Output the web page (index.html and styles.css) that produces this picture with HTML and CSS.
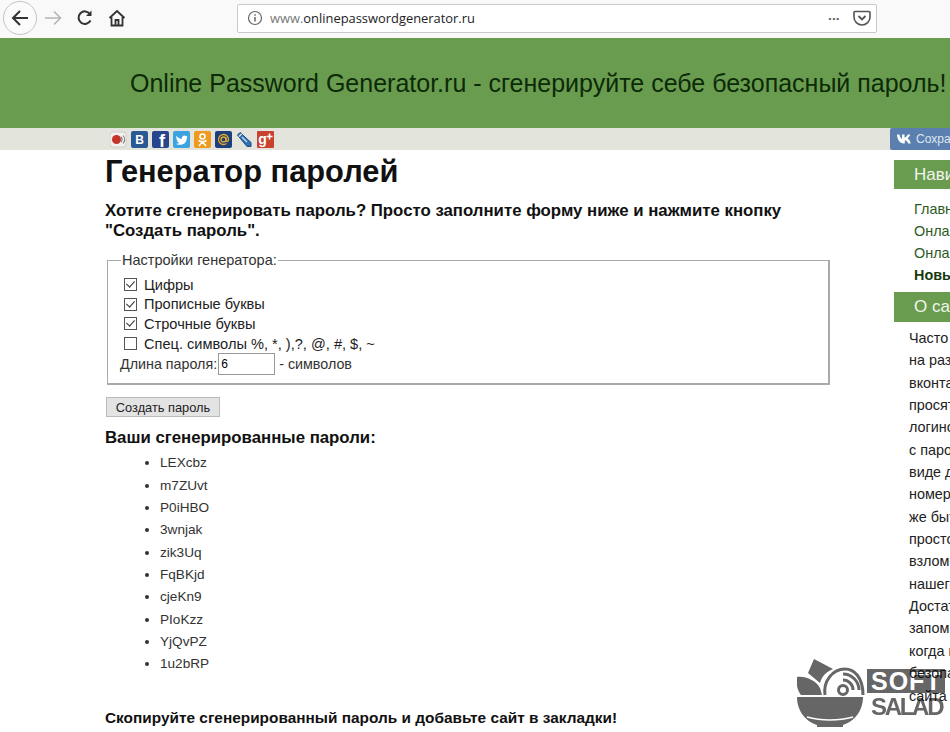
FILE: index.html
```html
<!DOCTYPE html>
<html lang="ru">
<head>
  <meta charset="UTF-8">
  <meta name="viewport" content="width=device-width, initial-scale=1.0">
  <title>Генератор паролей</title>
  <link rel="stylesheet" href="styles.css">
</head>
<body>
  <div class="toolbar">
    <div class="back-btn">
      <svg width="20" height="20" viewBox="0 0 20 20"><path d="M18 10H3M10 3l-7 7 7 7" fill="none" stroke="#333" stroke-width="2"/></svg>
    </div>
    <svg class="tool-icon forward" width="18" height="18" viewBox="0 0 18 18"><path d="M1 9h15M10 2.500l6.500 6.500-6.500 6.500" fill="none" stroke="#b5b5b5" stroke-width="1.600"/></svg>
    <svg class="tool-icon reload" width="18" height="18" viewBox="0 0 18 18"><path d="M14.500 11.500A6.300 6.300 0 1 1 14 5" fill="none" stroke="#333" stroke-width="2"/><path d="M15.500 1.500v5.500h-5.500z" fill="#333"/></svg>
    <svg class="tool-icon home" width="18" height="18" viewBox="0 0 18 18"><path d="M1.500 9 9 2l7.500 7M3.500 8v8.500h11V8M7.500 16.500V11h3v5.500" fill="none" stroke="#333" stroke-width="1.800"/></svg>
    <div class="urlbar">
      <svg class="info" width="16" height="16" viewBox="0 0 16 16"><circle cx="8" cy="8" r="6.500" fill="none" stroke="#666" stroke-width="1.200"/><path d="M8 7v4.500M8 4.300v1.500" stroke="#666" stroke-width="1.500"/></svg>
      <span class="url"><span class="url-dim">www.</span>onlinepasswordgenerator.ru</span>
      <span class="dots">•••</span>
      <svg class="pocket" width="18" height="18" viewBox="0 0 18 18"><path d="M2 2.500h14a1 1 0 0 1 1 1V8a8 8 0 0 1-16 0V3.500a1 1 0 0 1 1-1z" fill="none" stroke="#555" stroke-width="1.600"/><path d="M5.500 7 9 10.500 12.500 7" fill="none" stroke="#555" stroke-width="1.800"/></svg>
    </div>
  </div>

  <header class="site-header">
    <div class="site-title">Online Password Generator.ru - сгенерируйте себе безопасный пароль!</div>
  </header>

  <div class="share-strip">
    <div class="share-icons">
      <svg width="17" height="17" viewBox="0 0 17 17"><rect x="0" y="1" width="16" height="15" rx="3" fill="#f3f1ee" stroke="#cfcdc8"/><circle cx="6.500" cy="8.500" r="4.500" fill="#c8322c"/><path d="M11 6a3.500 3.500 0 0 1 0 5M13 4.500a6 6 0 0 1 0 8" fill="none" stroke="#777" stroke-width="1.100"/></svg>
      <svg width="17" height="17" viewBox="0 0 17 17"><rect width="17" height="17" rx="2" fill="#2a5a94"/><text x="8.500" y="13" class="icon-letter">B</text></svg>
      <svg width="17" height="17" viewBox="0 0 17 17"><rect width="17" height="17" rx="2" fill="#27458c"/><text x="10" y="15.500" class="icon-letter icon-f">f</text></svg>
      <svg width="17" height="17" viewBox="0 0 17 17"><rect width="17" height="17" rx="2" fill="#3ba3e0"/><path d="M3 5c2.500 2 4.500 2.800 5.800 2.800C8.600 5 11.500 3.600 13 5.300l1.500-.6-.8 1.500 1-.2-1 1.200c0 4-3 7-8 6.500-1-.1-2-.5-2.700-1 1.500 0 2.600-.4 3.400-1-1.400-.2-2.200-1-2.500-2h1.200C3.900 9.200 3.200 8.200 3.200 7l1.100.3C3.200 6.500 2.800 6 3 5z" fill="#fff"/></svg>
      <svg width="17" height="17" viewBox="0 0 17 17"><rect width="17" height="17" rx="2" fill="#ef9a1e"/><circle cx="8.500" cy="5.500" r="2.500" fill="none" stroke="#fff" stroke-width="1.600"/><path d="M4.500 9.500c2.500 1.600 5.500 1.600 8 0M8.500 11l-3.500 4M8.500 11l3.500 4" fill="none" stroke="#fff" stroke-width="1.600"/></svg>
      <svg width="17" height="17" viewBox="0 0 17 17"><rect width="17" height="17" rx="2" fill="#1f3f7c"/><circle cx="8.500" cy="8.500" r="2.500" fill="none" stroke="#e0a92a" stroke-width="1.300"/><path d="M11 6v3.500c0 1.500 2.500 1.500 2.500-1A5 5 0 1 0 11.500 12.500" fill="none" stroke="#e0a92a" stroke-width="1.300"/></svg>
      <svg width="17" height="17" viewBox="0 0 17 17"><path d="M1.500 4 4 1.500 15 11.500v4h-4z" fill="#2f6fb4" stroke="#1d4a80"/><path d="M3 5.500 5.500 3" stroke="#dbe8f5" stroke-width="1.500"/><path d="M6 6l5 5" stroke="#bcd6ee" stroke-width="1.500"/></svg>
      <svg width="17" height="17" viewBox="0 0 17 17"><rect width="17" height="17" rx="1" fill="#c8432f"/><text x="5.500" y="13" class="icon-letter icon-g">g</text><path d="M12.500 2.500v6M9.500 5.500h6" stroke="#fff" stroke-width="1.600"/></svg>
    </div>
    <div class="vk-save">
      <svg width="17" height="10" viewBox="0 0 17 10"><path d="M1 .5h2.500c.3 2.500 1.500 4 2.500 4.500V.5h2.500V3.500C9.800 3.300 11 2 11.800.5h2.400c-.4 1.800-1.700 3-2.700 3.800 1.200.7 2.600 2 3.300 5.200h-2.600c-.6-1.800-1.800-3-3.400-3.200v3.200H7.500C4 9.500 1.300 6 1 .5z" fill="#fff"/></svg>
      <span>Сохранить</span>
    </div>
  </div>

  <div class="page">
    <main class="content">
      <h1>Генератор паролей</h1>
      <p class="lead">Хотите сгенерировать пароль? Просто заполните форму ниже и нажмите кнопку "Создать пароль".</p>
      <form>
        <fieldset class="settings">
          <legend>Настройки генератора:</legend>
          <label class="check-row"><input type="checkbox" checked> Цифры</label>
          <label class="check-row"><input type="checkbox" checked> Прописные буквы</label>
          <label class="check-row"><input type="checkbox" checked> Строчные буквы</label>
          <label class="check-row"><input type="checkbox"> Спец. символы %, *, ),?, @, #, $, ~</label>
          <div class="length-row">Длина пароля:<input type="text" class="length-input" value="6"> - символов</div>
        </fieldset>
        <button type="button" class="create-btn">Создать пароль</button>
      </form>
      <h3>Ваши сгенерированные пароли:</h3>
      <ul class="passwords">
        <li>LEXcbz</li>
        <li>m7ZUvt</li>
        <li>P0iHBO</li>
        <li>3wnjak</li>
        <li>zik3Uq</li>
        <li>FqBKjd</li>
        <li>cjeKn9</li>
        <li>PIoKzz</li>
        <li>YjQvPZ</li>
        <li>1u2bRP</li>
      </ul>
      <p class="copy-note">Скопируйте сгенерированный пароль и добавьте сайт в закладки!</p>
    </main>

    <aside class="sidebar">
      <div class="side-title">Навигация</div>
      <ul class="side-nav">
        <li>Главная</li>
        <li>Онлайн</li>
        <li>Онлайн</li>
        <li class="current">Новый</li>
      </ul>
      <div class="side-title side-title-about">О сайте</div>
      <div class="side-text">
        <div>Часто</div>
        <div>на разных</div>
        <div>вконтакте</div>
        <div>просят</div>
        <div>логинов</div>
        <div>с паролем</div>
        <div>виде даты</div>
        <div>номера</div>
        <div>же быть</div>
        <div>просто</div>
        <div>взломе</div>
        <div>нашего</div>
        <div>Достаточно</div>
        <div>запомнить</div>
        <div>когда нужно</div>
        <div>безопасный</div>
        <div>сайта</div>
      </div>
    </aside>
  </div>

  <div class="watermark">
    <svg class="wm-bowl" width="70" height="72" viewBox="0 0 70 72">
      <path d="M0 39h66c0 15-10 25-20 28v2H20v-2C10 64 0 54 0 39z" fill="#666"/>
      <path d="M10 59c14 4 32 4 46 0" fill="none" stroke="#fff" stroke-width="1.500"/>
      <path d="M17 1 36 11C29 14 25 18 23 25L11 15z" fill="#666"/>
      <path d="M0 19c9-1 18 3 23 11l2 7H4C0 32-1 25 0 19z" fill="#666"/>
      <path d="M28 37c-2-13 7-26 20-26 9 0 18 8 18 26" fill="none" stroke="#666" stroke-width="3"/>
      <circle cx="46" cy="32" r="4.500" fill="none" stroke="#666" stroke-width="3"/>
      <path d="M46 22a10 10 0 0 1 10 10M46 16a16 16 0 0 1 16 16" fill="none" stroke="#666" stroke-width="3"/>
    </svg>
    <div class="wm-text">
      <div class="wm-soft">SOFT</div>
      <div class="wm-salad">SALAD</div>
    </div>
  </div>
</body>
</html>
```

FILE: styles.css
```css
html, body {
  margin: 0;
  width: 950px;
  height: 732px;
  overflow: hidden;
}
body {
  font-family: "Liberation Sans", Arial, sans-serif;
  font-size: 14px;
  color: #111;
  background: #fff;
  position: relative;
}

/* browser bar */
.toolbar {
  height: 38px;
  box-sizing: border-box;
  background: #f9f9fa;
  display: flex;
  align-items: center;
  padding: 0 0 2px 3px;
}
.back-btn {
  width: 32px;
  height: 32px;
  border: 1px solid #c4c4c6;
  border-radius: 50%;
  background: #fbfbfb;
  display: flex;
  align-items: center;
  justify-content: center;
}
.tool-icon {
  flex: none;
}
.forward {
  margin-left: 7px;
}
.reload {
  margin-left: 14px;
}
.home {
  margin-left: 14px;
}
.urlbar {
  margin-left: 111px;
  width: 640px;
  height: 29px;
  box-sizing: border-box;
  background: #fff;
  border: 1px solid #c9c9cb;
  border-radius: 2px;
  display: flex;
  align-items: center;
  padding: 0 5px 0 9px;
}
.url {
  margin-left: 7px;
  font-family: "Open Sans", sans-serif;
  font-size: 12.900px;
  color: #222;
  flex: 1;
}
.url-dim {
  color: #777;
}
.dots {
  font-size: 8px;
  color: #555;
  letter-spacing: 1px;
  margin-right: 13px;
}

/* header */
.site-header {
  height: 90px;
  background: #699c4f;
  display: flex;
  align-items: center;
  padding-left: 130px;
  box-sizing: border-box;
}
.site-title {
  font-size: 25px;
  color: #0d2a08;
  white-space: nowrap;
}
.share-strip {
  height: 22px;
  background: #e3e4dc;
  display: flex;
  align-items: center;
  justify-content: space-between;
  padding-left: 110px;
}
.share-icons {
  display: flex;
  gap: 4px;
}
.icon-letter {
  font-family: "Liberation Sans", sans-serif;
  font-size: 12px;
  font-weight: bold;
  fill: #fff;
  text-anchor: middle;
}
.icon-f {
  font-size: 18px;
}
.icon-g {
  font-size: 14px;
}
.vk-save {
  width: 60px;
  height: 22px;
  background: #5b7fae;
  border-radius: 2px 0 0 2px;
  display: flex;
  align-items: center;
  gap: 3px;
  padding-left: 6px;
  box-sizing: border-box;
  overflow: hidden;
  color: #dfe7f2;
  font-size: 12px;
  white-space: nowrap;
}
.vk-save svg {
  flex: none;
}

/* page */
.page {
  display: flex;
  padding-left: 105px;
}
.content {
  width: 725px;
  flex: none;
}
h1 {
  font-size: 30.800px;
  line-height: 34px;
  margin: 5px 0 0;
  color: #111;
}
.lead {
  font-size: 16.800px;
  font-weight: bold;
  line-height: 20px;
  margin: 12px 0 0;
}
.settings {
  margin: 11px 0 0 2px;
  padding: 7px 12px 9px 12px;
  border-style: solid;
  border-width: 1px 2px 2px 1px;
  border-color: #aaa;
  width: 723px;
  box-sizing: border-box;
}
legend {
  padding: 0 1px;
  margin-left: 1px;
  font-size: 14.500px;
  color: #333;
}
.check-row {
  display: flex;
  align-items: center;
  height: 19.600px;
  gap: 7px;
  font-size: 14.600px;
  color: #222;
  padding-left: 4px;
}
.check-row input {
  appearance: none;
  margin: 0;
  width: 13px;
  height: 13px;
  flex: none;
  box-sizing: border-box;
  border: 1px solid #555;
  background: #fff;
  position: relative;
}
.check-row input:checked::after {
  content: "";
  position: absolute;
  left: 3px;
  top: 0;
  width: 4px;
  height: 7px;
  border: solid #333;
  border-width: 0 1.500px 1.500px 0;
  transform: rotate(42deg);
}
.length-row {
  display: flex;
  align-items: center;
  height: 21px;
  font-size: 14.300px;
  color: #333;
  white-space: pre;
}
.length-input {
  width: 57px;
  height: 22px;
  box-sizing: border-box;
  border: 1px solid #999;
  margin: 0 0 0 1px;
  padding: 0 2px;
  font: 12px "Liberation Sans", sans-serif;
}
.create-btn {
  display: block;
  margin: 12px 0 0 1px;
  width: 114px;
  height: 20px;
  padding: 0;
  border: 1px solid #bbb;
  background: #e3e3e3;
  font: 12.800px "Liberation Sans", sans-serif;
  color: #222;
}
h3 {
  font-size: 16.800px;
  line-height: 20px;
  margin: 11px 0 0;
}
.passwords {
  list-style: disc;
  margin: 4px 0 0;
  padding-left: 55px;
}
.passwords li {
  height: 22.350px;
  line-height: 22px;
  font-size: 13.600px;
  color: #333;
}
.copy-note {
  font-size: 15.400px;
  font-weight: bold;
  margin: 33px 0 0;
  line-height: 18px;
}

/* right column, cut off by the window */
.sidebar {
  margin-left: 64px;
  width: 56px;
  flex: none;
  margin-top: 10px;
  overflow: hidden;
  white-space: nowrap;
}
.side-title {
  height: 29px;
  line-height: 29px;
  background: #699c4f;
  color: #f1f5ec;
  font-size: 17px;
  padding-left: 20px;
}
.side-title-about {
  height: 30px;
}
.side-nav {
  list-style: none;
  margin: 0;
  padding: 9px 0 6px 20px;
  font-size: 14.400px;
  color: #2d5a1e;
}
.side-nav li {
  height: 22px;
  line-height: 22px;
}
.side-nav .current {
  font-weight: bold;
  color: #173a0e;
}
.side-text {
  margin: 5px 0 0 15px;
  font-size: 14.400px;
  color: #222;
  line-height: 22.350px;
}

/* overlay watermark */
.watermark {
  position: absolute;
  left: 797px;
  top: 658px;
  display: flex;
  align-items: flex-start;
  mix-blend-mode: multiply;
  pointer-events: none;
}
.wm-text {
  margin: 11px 0 0 0;
  font-weight: bold;
  white-space: nowrap;
}
.wm-soft {
  width: 78px;
  height: 24px;
  background: #666;
  color: #fff;
  font: bold 25px/25px "Liberation Sans", sans-serif;
  padding-left: 4px;
  letter-spacing: 1px;
  box-sizing: border-box;
  overflow: hidden;
}
.wm-salad {
  color: #666;
  font: bold 24px/27px "Liberation Sans", sans-serif;
  letter-spacing: -2.300px;
  padding-left: 4px;
}
```
